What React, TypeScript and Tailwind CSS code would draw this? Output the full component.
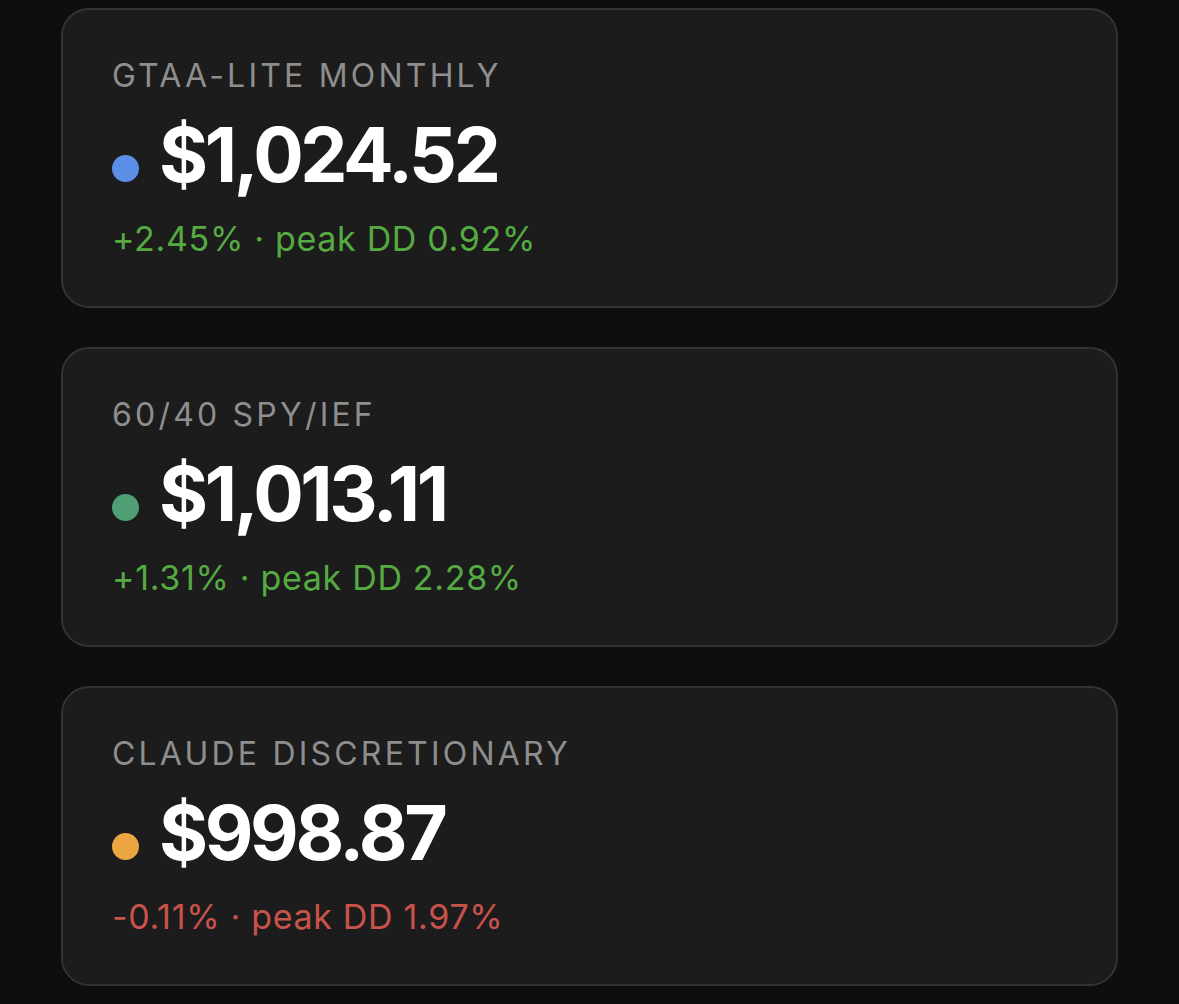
const strategies = [
  {
    name: "GTAA-LITE MONTHLY",
    value: "$1,024.52",
    change: "+2.45%",
    dd: "0.92%",
    dot: "bg-[#5b8ee6]",
    tone: "text-[#55ab41]",
  },
  {
    name: "60/40 SPY/IEF",
    value: "$1,013.11",
    change: "+1.31%",
    dd: "2.28%",
    dot: "bg-[#4f9e74]",
    tone: "text-[#55ab41]",
  },
  {
    name: "CLAUDE DISCRETIONARY",
    value: "$998.87",
    change: "-0.11%",
    dd: "1.97%",
    dot: "bg-[#eba642]",
    tone: "text-[#c9534b]",
  },
];

function StrategyCard({ s }: { s: (typeof strategies)[number] }) {
  return (
    <div className="flex h-[300px] flex-col rounded-[28px] border-2 border-[#333333] bg-[#1c1c1c] px-[49px] pt-[46px]">
      {/* label */}
      <div className="text-[32px] leading-[40px] tracking-[0.1em] text-[#8e8e8e]">{s.name}</div>

      {/* balance */}
      <div className="mt-[21px] flex items-baseline">
        <span className={`mb-[2px] mr-[20px] h-[27px] w-[27px] shrink-0 rounded-full ${s.dot}`} />
        <span className="text-[75px] font-bold leading-[75px] tracking-[-0.045em] text-white">{s.value}</span>
      </div>

      {/* return + drawdown */}
      <div className={`mt-[27px] text-[34px] leading-[40px] tracking-[0.02em] ${s.tone}`}>
        {s.change} · peak DD {s.dd}
      </div>
    </div>
  );
}

export default function App() {
  return (
    <div className="min-h-screen bg-[#0e0e0e] font-['Inter',sans-serif]">
      <div className="flex flex-col gap-[39px] pl-[61px] pr-[61px] pt-[8px]">
        {strategies.map((s) => (
          <StrategyCard key={s.name} s={s} />
        ))}
      </div>
    </div>
  );
}
